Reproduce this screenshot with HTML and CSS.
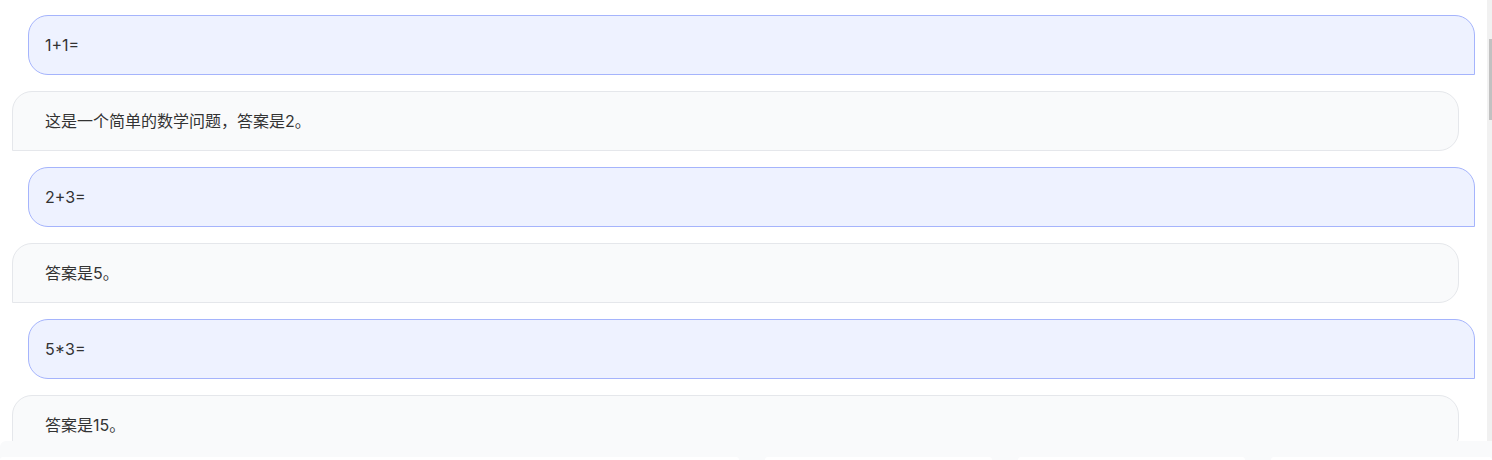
FILE: index.html
```html
<!DOCTYPE html>
<html lang="zh">
<head>
<meta charset="utf-8">
<title>Chat</title>
<link rel="stylesheet" href="styles.css">
</head>
<body>
<div class="app">
  <div class="scroll">
    <div class="messages">
      <div class="bubble user">1+1=</div>
      <div class="bubble bot">这是一个简单的数学问题，答案是2。</div>
      <div class="bubble user">2+3=</div>
      <div class="bubble bot">答案是5。</div>
      <div class="bubble user">5*3=</div>
      <div class="bubble bot">答案是15。</div>
    </div>
    <div class="scrollbar"><div class="thumb"></div></div>
  </div>
  <div class="footer">
    <div class="band"></div>
    <div class="tabs">
      <div class="tab t1"></div>
      <div class="tab t2"></div>
      <div class="tab t3"></div>
      <div class="tab t4"></div>
    </div>
  </div>
</div>
</body>
</html>
```
FILE: styles.css
```css
html, body {
  margin: 0;
  padding: 0;
  background: #ffffff;
}
body {
  width: 1492px;
  height: 460px;
  overflow: hidden;
  font-family: Inter, "Noto Sans CJK SC", sans-serif;
  font-size: 16px;
  color: #333333;
}
.app {
  display: flex;
  flex-direction: column;
  height: 460px;
}
.scroll {
  height: 441px;
  display: flex;
  overflow: hidden;
  flex-shrink: 0;
}
.messages {
  flex: 1;
  padding: 15px 12px 0 12px;
  display: flex;
  flex-direction: column;
  gap: 16px;
}
.bubble {
  box-sizing: border-box;
  height: 60px;
  flex-shrink: 0;
  line-height: 22px;
  border: 1px solid;
}
.user {
  margin-left: 16px;
  padding: 18px 16px;
  background: #eef2ff;
  border-color: #a5b4fc;
  border-radius: 20px 20px 0 20px;
}
.bot {
  margin-right: 16px;
  padding: 18px 32px;
  background: #f9fafb;
  border-color: #e5e7eb;
  border-radius: 20px 20px 20px 0;
}
.scrollbar {
  width: 5px;
  background: #f1f1f1;
  flex-shrink: 0;
}
.thumb {
  margin-top: 39px;
  margin-left: 2px;
  height: 81px;
  background: #c1c1c1;
}
.footer {
  flex: 1;
  display: flex;
  flex-direction: column;
  background: #ffffff;
}
.band {
  height: 16px;
  background: #f9fafb;
  border-top-left-radius: 6px;
}
.tabs {
  flex: 1;
  display: flex;
  gap: 26px;
  background: #f9fafb;
}
.tab {
  background: #ffffff;
  border-radius: 6px 6px 0 0;
}
.t1 { width: 739px; }
.t2 { width: 227px; }
.t3 { width: 227px; }
.t4 { flex: 1; }
```
